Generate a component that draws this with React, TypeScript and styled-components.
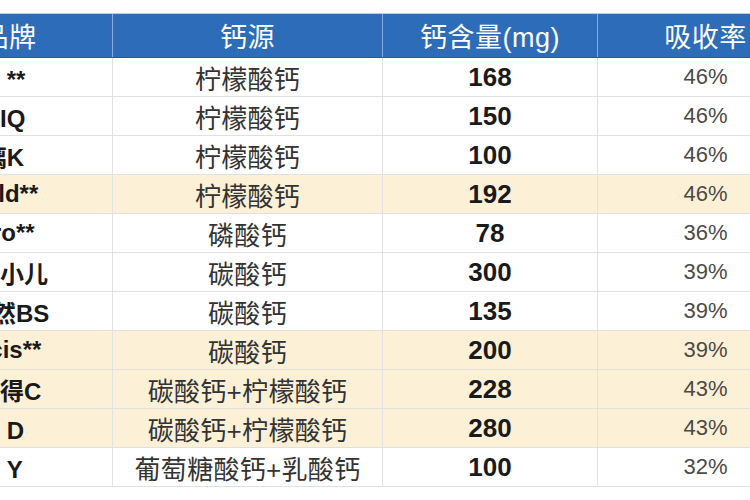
import { FC } from "react";
import styled, { createGlobalStyle } from "styled-components";

const GlobalStyle = createGlobalStyle`
  html, body {
    margin: 0;
    padding: 0;
    background: #fff;
  }
  body {
    font-family: "Liberation Sans", "Noto Sans CJK SC", sans-serif;
  }
`;

const Page = styled.div`
  width: 750px;
  height: 500px;
  overflow: hidden;
  background: #fff;
  padding-top: 13px;
  box-sizing: border-box;
`;

const Table = styled.div`
  display: flex;
  flex-direction: column;
  width: 907px;
  margin-left: -94px;
  border-top: 1px solid #b9cde6;
`;

const Header = styled.div`
  display: grid;
  grid-template-columns: 206px 270px 215px 216px;
  height: 43px;
  background: #2d6cb8;
  border-bottom: 1px solid #1f5aa0;
`;

const HeadCell = styled.div`
  display: flex;
  align-items: center;
  justify-content: center;
  color: #fff;
  font-size: 27px;
  letter-spacing: 0.5px;
  border-left: 1px solid #86acdb;

  &:first-child {
    border-left: none;
  }
`;

const Row = styled.div<{ $hl?: boolean }>`
  display: grid;
  grid-template-columns: 206px 270px 215px 216px;
  height: 38px;
  background: ${({ $hl }) => ($hl ? "#fcf0d7" : "#fff")};
  border-bottom: 1px solid #e0e0e0;
`;

const Cell = styled.div<{ $kind: "brand" | "source" | "amount" | "rate" }>`
  display: flex;
  align-items: center;
  justify-content: ${({ $kind }) => ($kind === "brand" ? "flex-start" : "center")};
  padding-left: ${({ $kind }) => ($kind === "brand" ? "46px" : "0")};
  border-left: ${({ $kind }) => ($kind === "brand" ? "none" : "1px solid #e2e2e2")};
  white-space: nowrap;
  font-size: ${({ $kind }) =>
    $kind === "rate" ? "22px" : $kind === "brand" ? "24px" : "26px"};
  font-weight: ${({ $kind }) =>
    $kind === "brand" || $kind === "amount" ? 700 : 400};
  color: ${({ $kind }) =>
    $kind === "rate" ? "#4a4a4a" : $kind === "source" ? "#333" : "#1a1a1a"};
  letter-spacing: ${({ $kind }) => ($kind === "source" ? "0.3px" : "0")};
`;

type Entry = {
  brand: string;
  source: string;
  amount: number;
  rate: string;
  hl?: boolean;
};

const entries: Entry[] = [
  { brand: "澳洲 **", source: "柠檬酸钙", amount: 168, rate: "46%" },
  { brand: "乐力IQ", source: "柠檬酸钙", amount: 150, rate: "46%" },
  { brand: "Ca璃K", source: "柠檬酸钙", amount: 100, rate: "46%" },
  { brand: "World**", source: "柠檬酸钙", amount: 192, rate: "46%", hl: true },
  { brand: "Nutro**", source: "磷酸钙", amount: 78, rate: "36%" },
  { brand: "迪巧小儿", source: "碳酸钙", amount: 300, rate: "39%" },
  { brand: "Pro然BS", source: "碳酸钙", amount: 135, rate: "39%" },
  { brand: "Calcis**", source: "碳酸钙", amount: 200, rate: "39%", hl: true },
  { brand: "钙尔得C", source: "碳酸钙+柠檬酸钙", amount: 228, rate: "43%", hl: true },
  { brand: "钙维 D", source: "碳酸钙+柠檬酸钙", amount: 280, rate: "43%", hl: true },
  { brand: "钙立 Y", source: "葡萄糖酸钙+乳酸钙", amount: 100, rate: "32%" },
];

const App: FC = () => (
  <Page>
    <GlobalStyle />
    <Table>
      <Header>
        <HeadCell>品牌</HeadCell>
        <HeadCell>钙源</HeadCell>
        <HeadCell>钙含量(mg)</HeadCell>
        <HeadCell>吸收率</HeadCell>
      </Header>
      {entries.map((e) => (
        <Row key={e.brand} $hl={e.hl}>
          <Cell $kind="brand">{e.brand}</Cell>
          <Cell $kind="source">{e.source}</Cell>
          <Cell $kind="amount">{e.amount}</Cell>
          <Cell $kind="rate">{e.rate}</Cell>
        </Row>
      ))}
    </Table>
  </Page>
);

export default App;
